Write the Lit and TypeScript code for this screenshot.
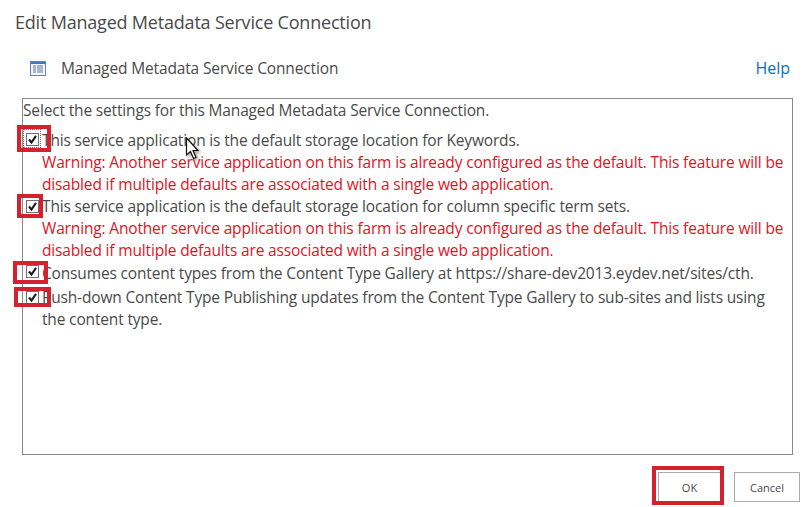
import { LitElement, html, css, svg } from "lit";
import { customElement } from "lit/decorators.js";

const WARNING = "Warning: Another service application on this farm is already configured as the default. This feature will be disabled if multiple defaults are associated with a single web application.";

const CHECK = svg`<svg width="13" height="13" viewBox="0 0 13 13"><rect x="0.5" y="0.5" width="12" height="12" fill="#fff" stroke="#707070"/><path d="M3 6.5 L5.5 9.5 L10 2.8" fill="none" stroke="#1a1a1a" stroke-width="2.1"/></svg>`;

@customElement("app-root")
export class AppRoot extends LitElement {
  static styles = css`
    :host { display: block; width: 810px; height: 507px; background: #fff; position: relative; overflow: hidden;
      font-family: "Open Sans", "Noto Sans", sans-serif; color: #4a4a4a; }
    .title { font-size: 18px; line-height: 24px; padding: 10px 0 0 15px; letter-spacing: -0.2px; }
    .head { display: flex; align-items: center; margin: 23px 20px 0 30px; height: 22px; }
    .head svg { flex: none; }
    .head .name { font-size: 15.5px; margin-left: 15px; flex: 1; letter-spacing: -0.14px; }
    .help { font-size: 16px; color: #0072c6; }
    .box { box-sizing: border-box; margin: 19px 0 0 22px; width: 771px; height: 357px; border: 1px solid #8a8a8a; font-size: 15.5px; line-height: 22px; letter-spacing: -0.16px; }
    .intro { height: 22px; }
    .row { display: grid; grid-template-columns: 19px 1fr; padding-right: 6px; }
    .row.r1 { margin-top: 8px; }
    .row.r3 { margin-top: 1px; }
    .row.r4 { margin-top: 2px; }
    .cb { display: flex; justify-content: flex-end; align-items: flex-start; padding-right: 3px; height: 14px; position: relative; }
    .p3 { padding-top: 3px; }
    .p4 { padding-top: 4px; }
    .p5 { padding-top: 5px; }
    .warn { color: #e2121f; display: block; }
    .focus { position: absolute; left: 0; top: 0; width: 18px; height: 19px; border: 1px dotted #666; box-sizing: border-box; }
    .mark { position: absolute; border: 4px solid #d3212d; box-sizing: border-box; pointer-events: none; }
    .cursor { position: absolute; left: 185px; top: 137px; filter: drop-shadow(2px 2px 1.5px rgba(0,0,0,.35)); }
    .actions { display: flex; justify-content: flex-end; gap: 13px; margin: 17px 10px 0 0; }
    button { width: 66px; height: 30px; box-sizing: border-box; background: #fff; border: 1px solid #ababab; font: 11px "Open Sans", sans-serif; color: #4a4a4a; padding: 0; }
    button.ok { width: 63px; }
    .m1 { left: 17px; top: 125px; width: 34px; height: 27px; }
    .m2 { left: 17px; top: 194px; width: 26px; height: 24px; }
    .m3 { left: 13px; top: 261px; width: 35px; height: 23px; }
    .m4 { left: 14px; top: 287px; width: 37px; height: 20px; }
    .m5 { left: 652px; top: 466px; width: 72px; height: 39px; }
  `;

  render() {
    return html`
      <div class="title">Edit Managed Metadata Service Connection</div>
      <div class="head">
        <svg width="16" height="15" viewBox="0 0 16 15">
          <rect x="0.5" y="0.5" width="15" height="14" fill="#f2f6fc" stroke="#5f83c6"/>
          <rect x="1" y="1" width="14" height="2" fill="#4a72c4"/>
          <path d="M3 5h3M7 5h6M3 7h3M7 7h6M3 9h3M7 9h6M3 11h3M7 11h6" stroke="#6577a0" stroke-width="1"/>
        </svg>
        <div class="name">Managed Metadata Service Connection</div>
        <div class="help">Help</div>
      </div>
      <div class="box">
        <div class="intro">Select the settings for this Managed Metadata Service Connection.</div>
        <div class="row r1">
          <div class="cb p4"><div class="focus"></div>${CHECK}</div>
          <div>This service application is the default storage location for Keywords.<span class="warn">${WARNING}</span></div>
        </div>
        <div class="row">
          <div class="cb p5">${CHECK}</div>
          <div>This service application is the default storage location for column specific term sets.<span class="warn">${WARNING}</span></div>
        </div>
        <div class="row r3">
          <div class="cb p3">${CHECK}</div>
          <div>Consumes content types from the Content Type Gallery at https://share-dev2013.eydev.net/sites/cth.</div>
        </div>
        <div class="row r4">
          <div class="cb p5">${CHECK}</div>
          <div>Push-down Content Type Publishing updates from the Content Type Gallery to sub-sites and lists using the content type.</div>
        </div>
      </div>
      <div class="actions"><button class="ok">OK</button><button>Cancel</button></div>

      <div class="mark m1"></div>
      <div class="mark m2"></div>
      <div class="mark m3"></div>
      <div class="mark m4"></div>
      <div class="mark m5"></div>
      <svg class="cursor" width="16" height="24" viewBox="0 0 16 24">
        <path d="M1.5 1 V18 L5.5 14.5 L8.5 21.5 L11 20.5 L8 13.5 L13 13.5 Z" fill="#fff" stroke="#111" stroke-width="1.2"/>
      </svg>
    `;
  }
}
